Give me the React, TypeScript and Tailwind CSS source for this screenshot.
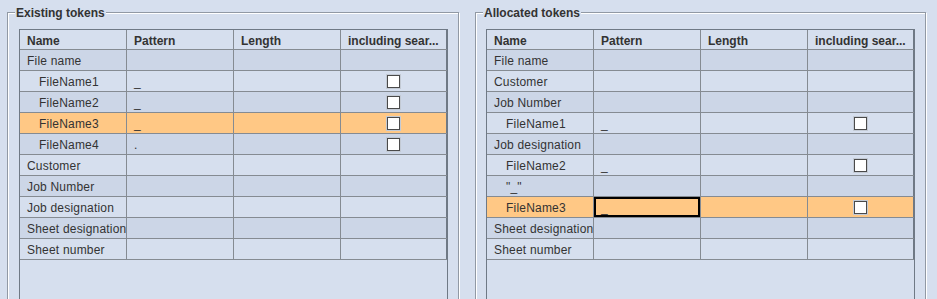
type Row = {
  name: string;
  child?: boolean;
  pattern?: string;
  check?: boolean;
  selected?: boolean;
  editing?: boolean;
};

const existing: Row[] = [
  { name: "File name" },
  { name: "FileName1", child: true, pattern: "_", check: true },
  { name: "FileName2", child: true, pattern: "_", check: true },
  { name: "FileName3", child: true, pattern: "_", check: true, selected: true },
  { name: "FileName4", child: true, pattern: ".", check: true },
  { name: "Customer" },
  { name: "Job Number" },
  { name: "Job designation" },
  { name: "Sheet designation" },
  { name: "Sheet number" },
];

const allocated: Row[] = [
  { name: "File name" },
  { name: "Customer" },
  { name: "Job Number" },
  { name: "FileName1", child: true, pattern: "_", check: true },
  { name: "Job designation" },
  { name: "FileName2", child: true, pattern: "_", check: true },
  { name: "\"_\"", child: true },
  { name: "FileName3", child: true, pattern: "_", check: true, selected: true, editing: true },
  { name: "Sheet designation" },
  { name: "Sheet number" },
];

const cols = ["w-[107px]", "w-[107px]", "w-[107px]", "w-[106px]"];

function CheckBox() {
  return (
    <span className="flex size-[15px] items-center justify-center border border-[#c3cad4]">
      <span className="size-[13px] border border-[#4a4a4a] bg-white" />
    </span>
  );
}

function TokenTable({ rows }: { rows: Row[] }) {
  return (
    <div className="h-[400px] w-[429px] border border-[#6f7985] bg-[#d6dfee]">
      <div className="flex h-[20px] border-b border-[#858b92] text-[12px] font-bold text-[#333]">
        {["Name", "Pattern", "Length", "including sear..."].map((h, i) => (
          <div key={h} className={`${cols[i]} flex shrink-0 items-center overflow-hidden whitespace-nowrap border-r border-[#858b92] pl-[7px] pt-[2px] ${i === 3 ? "border-r-[#6f7985]" : ""}`}>
            {h}
          </div>
        ))}
      </div>
      {rows.map((r, idx) => {
        const bg = r.selected ? "bg-[#ffc885]" : idx % 2 === 0 ? "bg-[#ccd6e7]" : "bg-[#d6dfee]";
        return (
          <div key={idx} className={`flex h-[21px] border-b border-[#858b92] text-[12px] tracking-[0.2px] text-[#333] ${bg}`}>
            <div className={`${cols[0]} flex shrink-0 items-center overflow-hidden whitespace-nowrap border-r border-[#858b92] pt-[2px] ${r.child ? "pl-[19px]" : "pl-[7px]"}`}>
              {r.name}
            </div>
            <div className={`${cols[1]} relative flex shrink-0 items-center overflow-hidden whitespace-nowrap border-r border-[#858b92] pl-[7px] pt-[2px]`}>
              {r.pattern}
              {r.editing && <span className="absolute inset-0 border-2 border-black" />}
            </div>
            <div className={`${cols[2]} shrink-0 border-r border-[#858b92]`} />
            <div className={`${cols[3]} flex shrink-0 items-center justify-center border-r border-[#6f7985]`}>
              {r.check && <CheckBox />}
            </div>
          </div>
        );
      })}
    </div>
  );
}

function Panel({ title, rows, className }: { title: string; rows: Row[]; className: string }) {
  return (
    <div className={`relative h-[400px] shrink-0 border border-[#9199a4] pt-[16px] shadow-[inset_1px_1px_0_#ffffff,1px_1px_0_#ffffff] ${className}`}>
      <span className="absolute left-[7px] top-[-8px] bg-[#d6dfee] px-[1px] text-[12px] font-bold leading-[16px] text-[#333]">
        {title}
      </span>
      <TokenTable rows={rows} />
    </div>
  );
}

export default function App() {
  return (
    <div className="flex h-[299px] w-[937px] gap-[16px] overflow-hidden bg-[#d6dfee] pl-[7px] pt-[12px] font-['Liberation_Sans',Arial,sans-serif]">
      <Panel title="Existing tokens" rows={existing} className="w-[452px] pl-[11px]" />
      <Panel title="Allocated tokens" rows={allocated} className="w-[451px] pl-[10px]" />
    </div>
  );
}
